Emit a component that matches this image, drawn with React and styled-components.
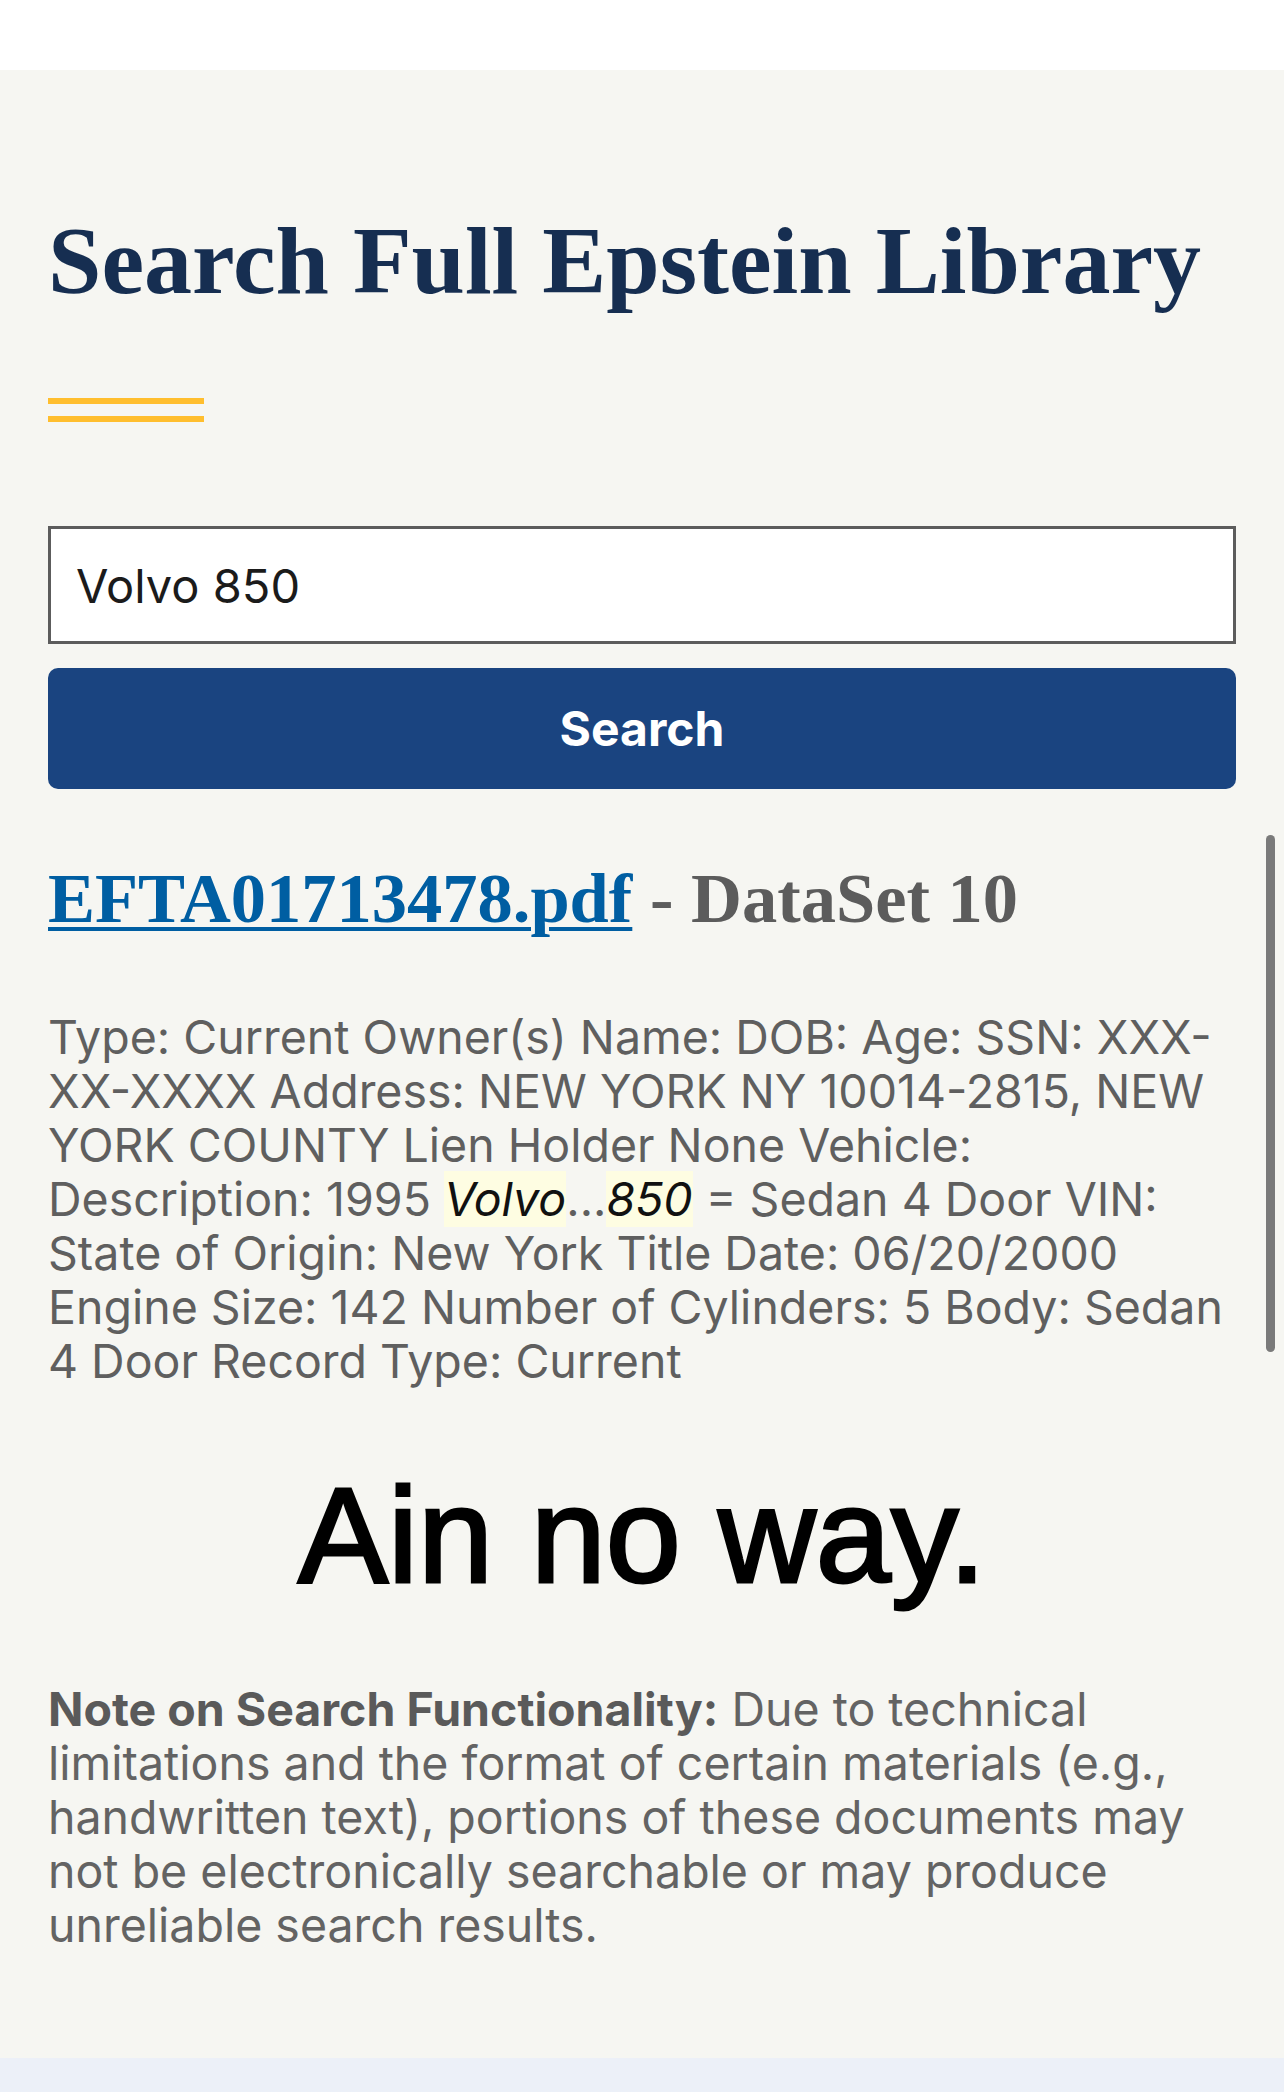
import React from 'react';
import styled, { createGlobalStyle } from 'styled-components';

const GlobalStyle = createGlobalStyle`
  html, body {
    margin: 0;
    padding: 0;
    background: #f6f6f2;
  }
  body {
    font-family: Inter, "Liberation Sans", sans-serif;
  }
`;

function App() {
  return (
    <Page>
      <GlobalStyle />
      <TopBar />
      <Main>
        <Title>Search Full Epstein Library</Title>
        <Accent>
          <AccentBar />
          <AccentBar />
        </Accent>
        <SearchInput type="text" defaultValue="Volvo 850" aria-label="Search" />
        <SearchButton type="button">Search</SearchButton>

        <ResultTitle>
          <ResultLink href="#">EFTA01713478.pdf</ResultLink> - DataSet 10
        </ResultTitle>
        <ResultText>
          Type: Current Owner(s) Name: DOB: Age: SSN: XXX-XX-XXXX Address: NEW YORK NY
          10014-2815, NEW YORK COUNTY Lien Holder None Vehicle: Description: 1995{' '}
          <Hit>Volvo</Hit>...<Hit>850</Hit> = Sedan 4 Door VIN: State of Origin: New York
          Title Date: 06/20/2000 Engine Size: 142 Number of Cylinders: 5 Body: Sedan 4 Door
          Record Type: Current
        </ResultText>

        <Caption>Ain no way.</Caption>

        <Note>
          <strong>Note on Search Functionality:</strong> Due to technical limitations and the
          format of certain materials (e.g., handwritten text), portions of these documents
          may not be electronically searchable or may produce unreliable search results.
        </Note>
      </Main>
      <FooterBand />
      <ScrollThumb />
    </Page>
  );
}
export default App;

const Page = styled.div`
  min-height: 2092px;
  display: flex;
  flex-direction: column;
  background: #f6f6f2;
`;
const TopBar = styled.header`
  height: 70px;
  background: #ffffff;
`;
const Main = styled.main`
  flex: 1;
  display: flex;
  flex-direction: column;
  padding: 0 48px;
`;
const Title = styled.h1`
  margin: 141px 0 0;
  font-family: "Liberation Serif", "DejaVu Serif", serif;
  font-weight: 700;
  font-size: 96px;
  line-height: 100px;
  color: #162e51;
  white-space: nowrap;
`;
const Accent = styled.div`
  margin-top: 87px;
  display: flex;
  flex-direction: column;
  gap: 12px;
`;
const AccentBar = styled.span`
  display: block;
  width: 156px;
  height: 6px;
  background: #ffbe2e;
`;
const SearchInput = styled.input`
  margin-top: 104px;
  box-sizing: border-box;
  width: 100%;
  height: 118px;
  padding: 0 25px;
  border: 3px solid #5c5c5c;
  border-radius: 0;
  background: #ffffff;
  font-family: Inter, "Liberation Sans", sans-serif;
  font-size: 47px;
  color: #1b1b1b;
  outline: none;
`;
const SearchButton = styled.button`
  margin-top: 24px;
  height: 121px;
  border: none;
  border-radius: 10px;
  background: #1a4480;
  color: #ffffff;
  font-family: Inter, "Liberation Sans", sans-serif;
  font-weight: 700;
  font-size: 48px;
  cursor: pointer;
`;
const ResultTitle = styled.h2`
  margin: 71px 0 0;
  font-family: "Liberation Serif", "DejaVu Serif", serif;
  font-weight: 700;
  font-size: 70.5px;
  line-height: 76px;
  color: #5c5c5c;
`;
const ResultLink = styled.a`
  color: #005ea2;
  text-decoration: underline;
  text-decoration-thickness: 4px;
  text-underline-offset: 5px;
`;
const ResultText = styled.p`
  margin: 74px 0 0;
  font-size: 46.5px;
  line-height: 54px;
  color: #5f5f5f;
`;
const Hit = styled.mark`
  background: #fefde2;
  color: #111111;
  font-style: italic;
`;
const Caption = styled.div`
  margin-top: 80px;
  text-align: center;
  font-family: "Liberation Sans", Arial, sans-serif;
  font-size: 135px;
  line-height: 135px;
  color: #000000;
  -webkit-text-stroke: 3px #000000;
`;
const Note = styled.p`
  margin: 79px 0 0;
  font-size: 46.5px;
  line-height: 54px;
  color: #636363;
  strong {
    font-weight: 700;
    color: #5a5a5a;
  }
`;
const FooterBand = styled.footer`
  height: 34px;
  background: #ecf0f8;
`;
const ScrollThumb = styled.div`
  position: fixed;
  top: 835px;
  right: 9px;
  width: 9px;
  height: 517px;
  border-radius: 5px;
  background: #7a7a7a;
`;
